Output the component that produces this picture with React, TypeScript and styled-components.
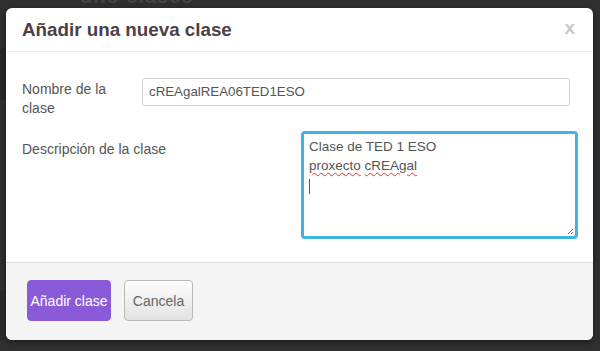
import React from "react";
import styled, { createGlobalStyle } from "styled-components";

const Global = createGlobalStyle`
  html, body { margin: 0; padding: 0; }
  body {
    background: #2f2f2f;
    font-family: "Liberation Sans", Arial, sans-serif;
    width: 600px;
    height: 351px;
    overflow: hidden;
  }
`;

const Page = styled.div`
  position: relative;
  width: 600px;
  height: 351px;
  display: flex;
  align-items: flex-start;
  background: #2f2f2f;
`;

const Backdrop = styled.div`
  position: absolute;
  inset: 0;
  pointer-events: none;
`;

const BackHeading = styled.div`
  position: absolute;
  left: 80px;
  top: -15px;
  font-size: 20px;
  font-weight: bold;
  color: #444;
  letter-spacing: 1px;
`;

const BackStrip = styled.div<{ $top: number; $h: number; $c: string }>`
  position: absolute;
  left: 0;
  width: 57px;
  top: ${(p) => p.$top}px;
  height: ${(p) => p.$h}px;
  background: ${(p) => p.$c};
`;

const Modal = styled.div`
  position: relative;
  margin: 8px 7px 0 6px;
  width: 587px;
  height: 332px;
  background: #fff;
  border-radius: 6px;
  display: flex;
  flex-direction: column;
  overflow: hidden;
  box-shadow: 0 2px 6px rgba(0, 0, 0, 0.4);
`;

const Header = styled.div`
  height: 44px;
  box-sizing: border-box;
  border-bottom: 1px solid #eeeeee;
  display: flex;
  align-items: center;
  justify-content: space-between;
  padding: 0 16px 0 16px;
`;

const Title = styled.h3`
  margin: 0;
  font-size: 18.8px;
  font-weight: bold;
  color: #4d4045;
  padding-top: 1px;
`;

const Close = styled.span`
  font-size: 19px;
  color: #c9c9c9;
  font-weight: bold;
  margin-right: 2px;
  margin-top: -3px;
`;

const Body = styled.div`
  flex: 1;
  padding: 26px 23px 0 16px;
  display: flex;
  flex-direction: column;
  gap: 20px;
`;

const Row = styled.div`
  display: flex;
  align-items: flex-start;
`;

const Label = styled.label<{ $width?: number }>`
  font-size: 14px;
  line-height: 19px;
  color: #555;
  padding-top: 2px;
  white-space: nowrap;
  width: ${(p) => (p.$width ? `${p.$width}px` : "auto")};
  flex: none;
`;

const Input = styled.div`
  flex: 1;
  height: 28px;
  box-sizing: border-box;
  border: 1px solid #d0d0d0;
  border-radius: 3px;
  padding: 0 6px;
  font-size: 13.3px;
  line-height: 26px;
  color: #555;
`;

const TextArea = styled.div`
  position: relative;
  width: 277px;
  margin-left: auto;
  margin-right: -8px;
  margin-top: -7px;
  height: 108px;
  box-sizing: border-box;
  border: 3px solid #3fb4e2;
  border-radius: 4px;
  padding: 3px 5px;
  font-size: 13.5px;
  line-height: 19px;
  color: #555;
`;

const Misspelled = styled.span`
  text-decoration: underline wavy #e0392f;
  text-decoration-thickness: 1px;
  text-underline-offset: 2px;
`;

const Caret = styled.span`
  display: inline-block;
  width: 1px;
  height: 15px;
  background: #555;
  margin-top: 4px;
`;

const Grip = styled.svg`
  position: absolute;
  right: 1px;
  bottom: 1px;
`;

const Footer = styled.div`
  height: 78px;
  box-sizing: border-box;
  background: #f4f4f4;
  border-top: 1px solid #dedede;
  display: flex;
  align-items: flex-start;
  gap: 13px;
  padding: 17px 0 0 21px;
`;

const Button = styled.button<{ $primary?: boolean }>`
  height: 41px;
  box-sizing: border-box;
  border-radius: 4px;
  font-family: "Liberation Sans", Arial, sans-serif;
  font-size: 14px;
  padding: 0;
  white-space: nowrap;
  cursor: pointer;
  border: 1px solid ${(p) => (p.$primary ? "#8a5ad8" : "#b8b8b8")};
  color: ${(p) => (p.$primary ? "#fff" : "#666")};
  background: ${(p) =>
    p.$primary ? "#8a5ad8" : "linear-gradient(#fdfdfd, #e2e2e2)"};
  width: ${(p) => (p.$primary ? "84px" : "69px")};
`;

export default function App() {
  return (
    <>
      <Global />
      <Page>
        <Backdrop>
          <BackHeading>uno clases</BackHeading>
          <BackStrip $top={48} $h={52} $c="#262626" />
          <BackStrip $top={290} $h={50} $c="#2a2a2a" />
        </Backdrop>
        <Modal>
          <Header>
            <Title>Añadir una nueva clase</Title>
            <Close>x</Close>
          </Header>
          <Body>
            <Row>
              <Label $width={120}>
                Nombre de la
                <br />
                clase
              </Label>
              <Input>cREAgalREA06TED1ESO</Input>
            </Row>
            <Row>
              <Label>Descripción de la clase</Label>
              <TextArea>
                Clase de TED 1 ESO
                <br />
                <Misspelled>proxecto</Misspelled> <Misspelled>cREAgal</Misspelled>
                <br />
                <Caret />
                <Grip width="8" height="8" viewBox="0 0 8 8">
                  <path d="M7 2 L2 7 M7 5 L5 7" stroke="#777" strokeWidth="1" />
                </Grip>
              </TextArea>
            </Row>
          </Body>
          <Footer>
            <Button $primary>Añadir clase</Button>
            <Button>Cancela</Button>
          </Footer>
        </Modal>
      </Page>
    </>
  );
}
